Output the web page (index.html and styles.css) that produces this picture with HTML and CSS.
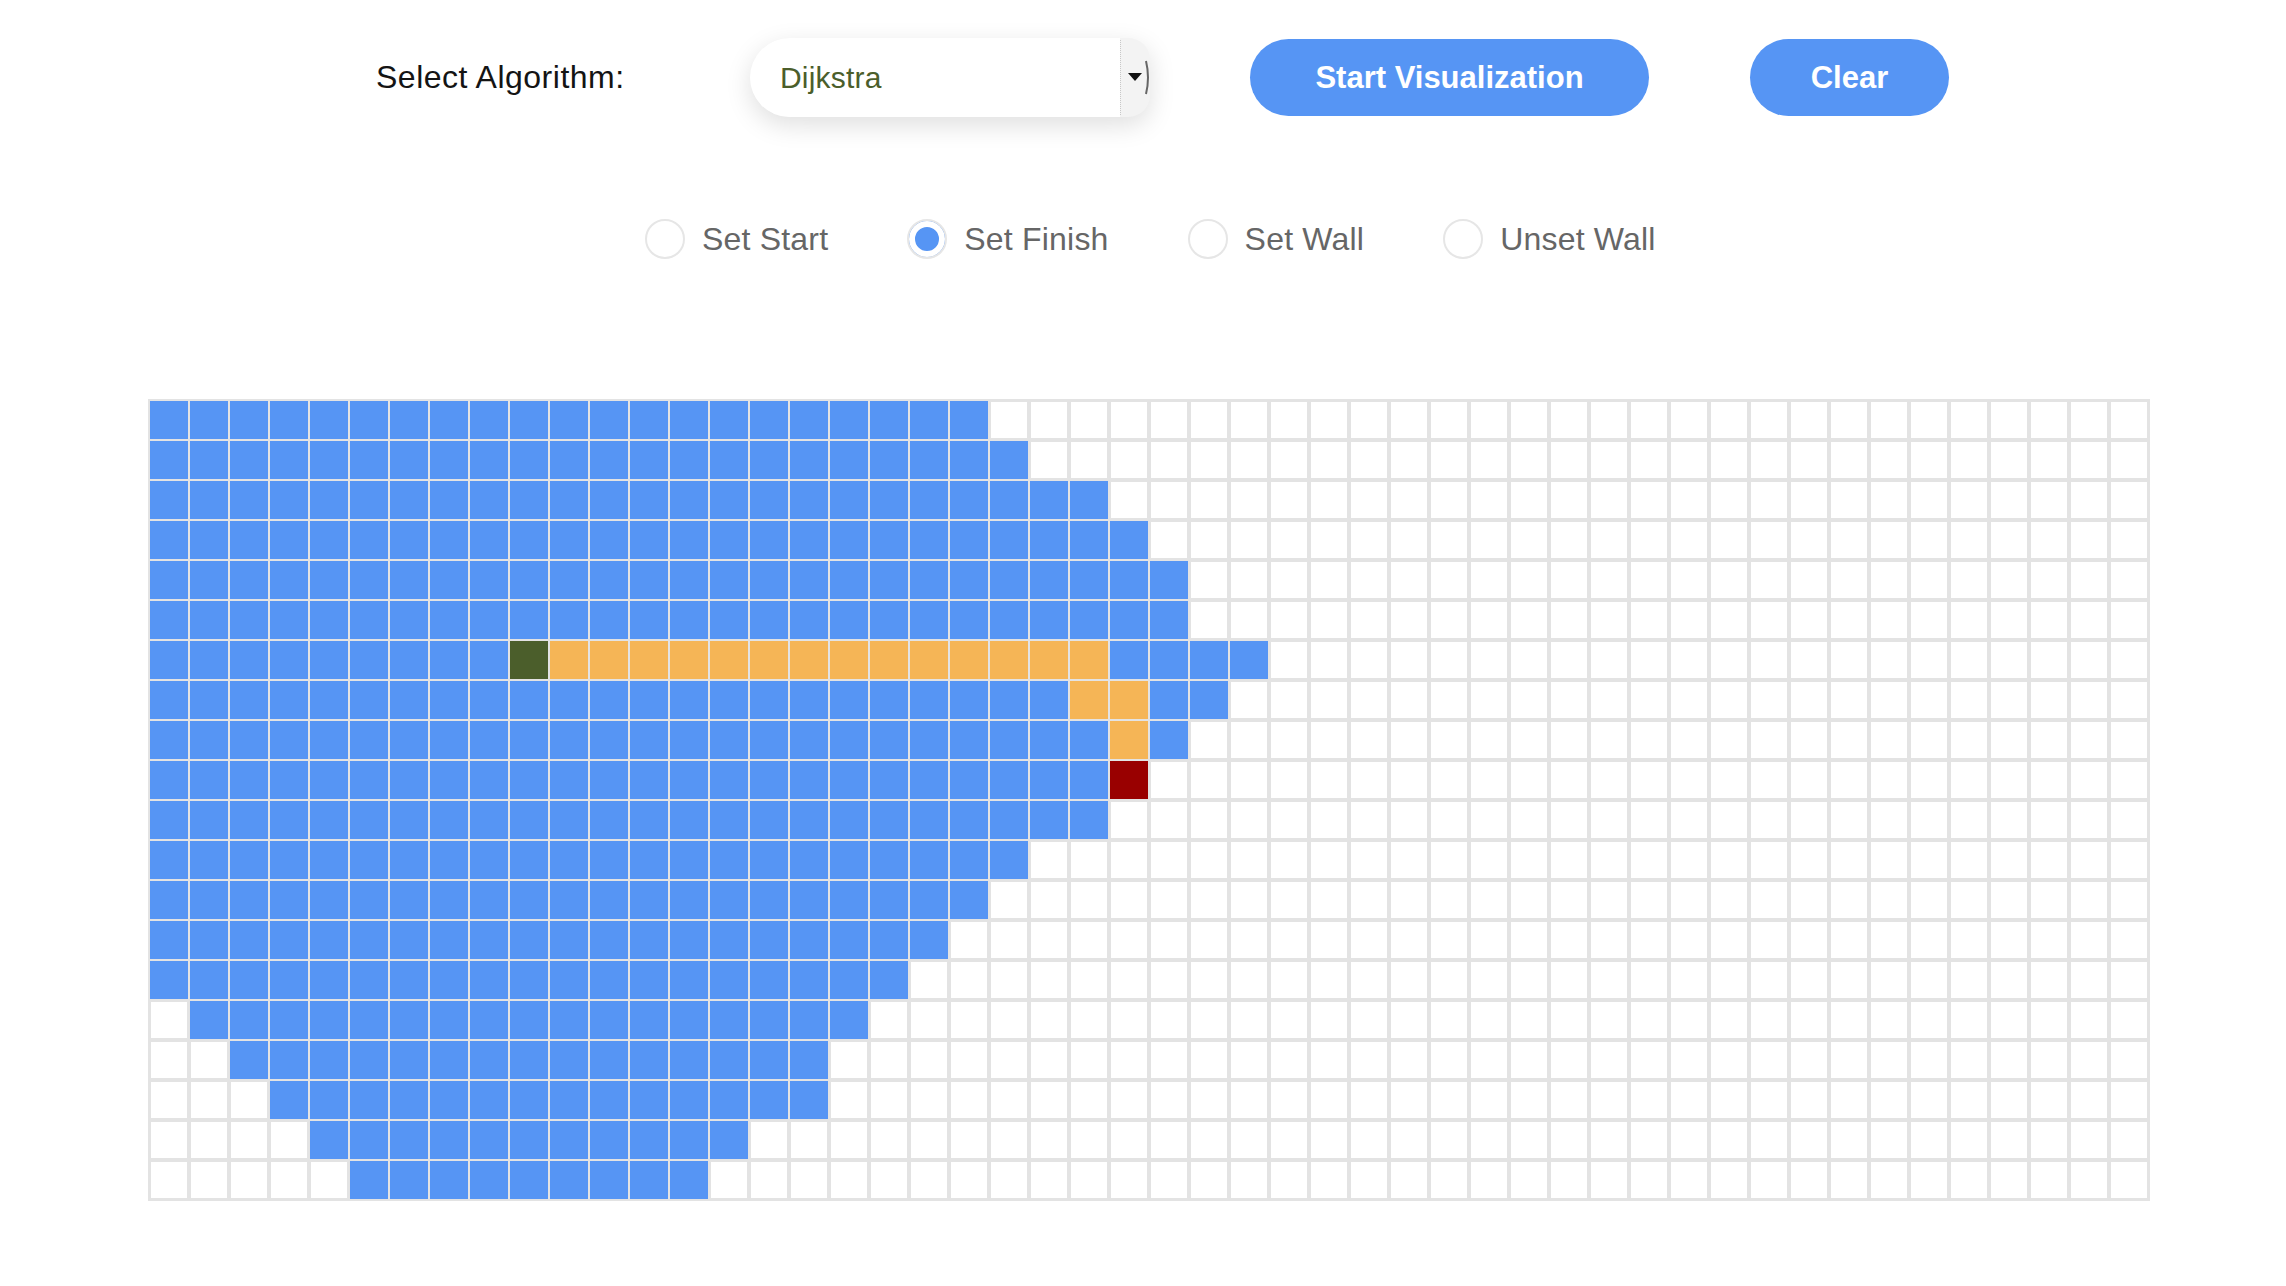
FILE: index.html
```html
<!DOCTYPE html>
<html lang="en">
<head>
<meta charset="utf-8">
<title>Pathfinding Visualizer</title>
<link rel="stylesheet" href="styles.css">
</head>
<body>
<div class="toolbar">
  <span class="label">Select Algorithm:</span>
  <div class="select">
    <span class="select-value">Dijkstra</span>
    <span class="select-arrow">
      <svg width="30" height="79" viewBox="0 0 30 79">
        <line x1="0.5" y1="2" x2="0.5" y2="77" stroke="#c8c8c8" stroke-width="1" stroke-dasharray="1 1"/>
        <path d="M8 35 L22 35 L15 43 Z" fill="#111"/>
        <path d="M26 23 Q30 39.5 26 56" fill="none" stroke="#666" stroke-width="2"/>
      </svg>
    </span>
  </div>
  <button class="btn btn-start">Start Visualization</button>
  <button class="btn btn-clear">Clear</button>
</div>
<div class="modes">
  <label class="mode"><span class="radio"></span><span class="mode-text">Set Start</span></label>
  <label class="mode"><span class="radio radio-on"></span><span class="mode-text">Set Finish</span></label>
  <label class="mode"><span class="radio"></span><span class="mode-text">Set Wall</span></label>
  <label class="mode"><span class="radio"></span><span class="mode-text">Unset Wall</span></label>
</div>
<div class="grid" id="grid"></div>
<script src="script.js"></script>
</body>
</html>
```
FILE: styles.css
```css
html, body {
  margin: 0;
  padding: 0;
  background: #ffffff;
  font-family: "Liberation Sans", Arial, sans-serif;
}

.toolbar {
  display: flex;
  align-items: center;
  padding: 38px 0 0 376px;
  height: 79px;
}

.label {
  width: 374px;
  flex-shrink: 0;
  font-size: 32px;
  letter-spacing: 0.5px;
  color: #141414;
}

.select {
  width: 400px;
  height: 79px;
  flex-shrink: 0;
  display: flex;
  border-radius: 40px 22px 22px 40px;
  background: #f3f3f3;
  box-shadow: 0 8px 26px rgba(0, 0, 0, 0.13);
  margin-right: 100px;
}

.select-value {
  flex: 1;
  display: flex;
  align-items: center;
  padding-left: 30px;
  background: #ffffff;
  border-radius: 40px 0 0 40px;
  font-size: 30px;
  letter-spacing: 0.2px;
  color: #4b5e2b;
}

.select-arrow {
  width: 30px;
  height: 79px;
  display: block;
}

.select-arrow svg {
  display: block;
}

.btn {
  height: 77px;
  border: none;
  border-radius: 39px;
  background: #5695f4;
  color: #ffffff;
  font-family: "Liberation Sans", Arial, sans-serif;
  font-weight: bold;
  font-size: 31px;
  padding: 0;
  flex-shrink: 0;
}

.btn-start {
  width: 399px;
  margin-right: 101px;
}

.btn-clear {
  width: 199px;
}

.modes {
  display: flex;
  align-items: center;
  gap: 79px;
  margin-top: 102px;
  padding-left: 645px;
  height: 40px;
}

.mode {
  display: flex;
  align-items: center;
  gap: 17px;
}

.radio {
  width: 40px;
  height: 40px;
  box-sizing: border-box;
  border: 2px solid #e6e6e6;
  border-radius: 50%;
  background: #ffffff;
}

.radio-on {
  background: #5695f4;
  box-shadow: inset 0 0 0 6px #ffffff;
}

.mode-text {
  font-size: 32px;
  letter-spacing: 0.2px;
  color: #666666;
}

.grid {
  display: grid;
  grid-template-columns: repeat(50, 40px);
  grid-auto-rows: 40px;
  width: 2000px;
  border: 1px solid #e3e3e3;
  margin: 140px 0 0 148px;
}

.cell {
  box-sizing: border-box;
  border: 2px solid #e3e3e3;
  background: #ffffff;
}

.cell.visited,
.cell.path,
.cell.start,
.cell.finish {
  border-width: 1px;
}

.cell.visited { background: #5695f4; }
.cell.path { background: #f5b556; }
.cell.start { background: #4b5e2b; }
.cell.finish { background: #990000; }
```
FILE: script.js
```js
(function () {
  var ranges = [
    [0, 20], [0, 21], [0, 23], [0, 24], [0, 25],
    [0, 25], [0, 27], [0, 26], [0, 25], [0, 23],
    [0, 23], [0, 21], [0, 20], [0, 19], [0, 18],
    [1, 17], [2, 16], [3, 16], [4, 14], [5, 13]
  ];
  var path = {};
  for (var c = 10; c <= 23; c++) path['6,' + c] = 1;
  path['7,23'] = 1; path['7,24'] = 1; path['8,24'] = 1;
  var grid = document.getElementById('grid');
  var frag = document.createDocumentFragment();
  for (var r = 0; r < 20; r++) {
    for (var col = 0; col < 50; col++) {
      var d = document.createElement('div');
      var cls = 'cell';
      var key = r + ',' + col;
      if (r === 6 && col === 9) cls += ' start';
      else if (r === 9 && col === 24) cls += ' finish';
      else if (path[key]) cls += ' path';
      else if (col >= ranges[r][0] && col <= ranges[r][1]) cls += ' visited';
      d.className = cls;
      frag.appendChild(d);
    }
  }
  grid.appendChild(frag);
})();
```
